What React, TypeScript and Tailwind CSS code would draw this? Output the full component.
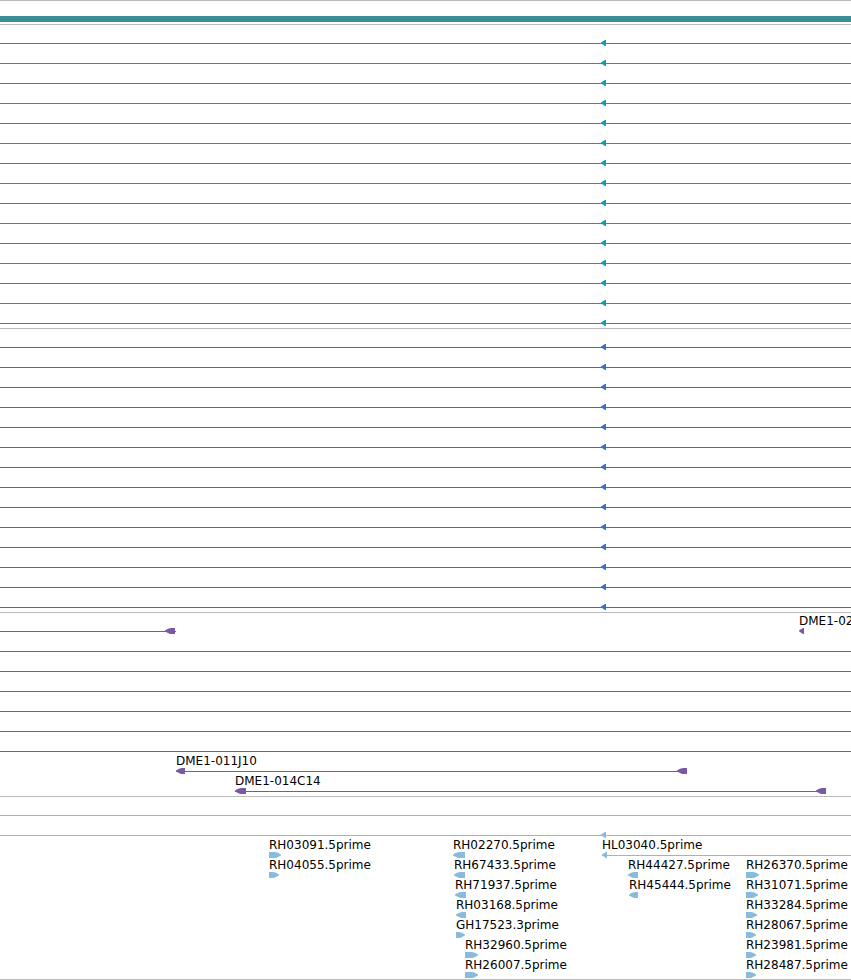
type Feature = { start: number; end: number; dir: "left" | "right"; label?: string };
type Span = { from: number; to?: number };
type RowData = { span?: Span; features?: Feature[] };
type Tone = "teal" | "blue" | "purple" | "sky";

const toneText: Record<Tone, string> = {
  teal: "text-[#0a9dba]",
  blue: "text-[#3470cc]",
  purple: "text-[#7759a8]",
  sky: "text-[#88bbdd]",
};

const left = (start: number, end: number, label?: string): Feature => ({ start, end, dir: "left", label });
const right = (start: number, end: number, label?: string): Feature => ({ start, end, dir: "right", label });
const repeat = (count: number, row: RowData): RowData[] => Array.from({ length: count }, () => row);

const hit: RowData = { span: { from: 0 }, features: [left(601, 606)] };

const bacRows: RowData[] = [
  { span: { from: 0, to: 176 }, features: [left(165, 175), left(799, 804, "DME1-02")] },
  ...repeat(6, { span: { from: 0 } }),
  { span: { from: 176, to: 687 }, features: [left(176, 185, "DME1-011J10"), left(677, 687)] },
  { span: { from: 235, to: 826 }, features: [left(235, 246, "DME1-014C14"), left(816, 826)] },
];

const estRows: RowData[] = [
  { span: { from: 0 } },
  hit,
  {
    span: { from: 602 },
    features: [right(269, 281, "RH03091.5prime"), left(453, 465, "RH02270.5prime"), left(602, 607, "HL03040.5prime")],
  },
  {
    features: [
      right(269, 279, "RH04055.5prime"),
      left(454, 465, "RH67433.5prime"),
      left(628, 638, "RH44427.5prime"),
      right(746, 759, "RH26370.5prime"),
    ],
  },
  {
    features: [
      left(455, 466, "RH71937.5prime"),
      left(629, 638, "RH45444.5prime"),
      right(746, 758, "RH31071.5prime"),
    ],
  },
  { features: [left(456, 466, "RH03168.5prime"), right(746, 757, "RH33284.5prime")] },
  { features: [right(456, 465, "GH17523.3prime"), right(746, 756, "RH28067.5prime")] },
  { features: [right(465, 478, "RH32960.5prime"), right(746, 756, "RH23981.5prime")] },
  { features: [right(465, 478, "RH26007.5prime"), right(746, 756, "RH28487.5prime")] },
];

function Arrow({ width, dir }: { width: number; dir: Feature["dir"] }) {
  const outline: [number, number][] =
    width > 6
      ? [
          [0, 2.4],
          [3, 0.8],
          [6, 0],
          [width, 0],
          [width, 6],
          [5, 6],
          [3, 5],
          [0, 3.4],
        ]
      : [
          [0, 2.6],
          [width - 1, 0],
          [width, 0],
          [width, 6],
          [width - 1, 6],
          [0, 3.2],
        ];
  const points = outline.map(([x, y]) => `${dir === "left" ? x : width - x},${y}`).join(" ");
  return (
    <svg className="block shrink-0" width={width} height={6} fill="currentColor" aria-hidden="true">
      <polygon points={points} />
    </svg>
  );
}

/* One alignment pinned at its base position: name above, strand arrow below. */
function FeaturePin({ feature }: { feature: Feature }) {
  return (
    <div className="absolute top-0 flex flex-col items-start" style={{ left: feature.start }}>
      <span className="h-[15px] whitespace-nowrap leading-4 text-black">{feature.label}</span>
      <Arrow width={feature.end - feature.start} dir={feature.dir} />
    </div>
  );
}

function Row({ row }: { row: RowData }) {
  const { span, features = [] } = row;
  return (
    <div className="relative flex h-5 items-end pb-px">
      {span && (
        <div
          className={span.to === undefined ? "h-px grow bg-current" : "h-px shrink-0 bg-current"}
          style={{ marginLeft: span.from, width: span.to === undefined ? undefined : span.to - span.from }}
        />
      )}
      {features.map((f) => (
        <FeaturePin key={f.start} feature={f} />
      ))}
    </div>
  );
}

function Track({ rows, tone }: { rows: RowData[]; tone: Tone }) {
  return (
    <section className={`flex flex-col border-t border-[#bbbbbb] ${toneText[tone]}`}>
      {rows.map((row, i) => (
        <Row key={i} row={row} />
      ))}
    </section>
  );
}

export default function App() {
  return (
    <main className="flex w-full flex-col gap-[3px] overflow-hidden border-y border-[#bbbbbb] bg-white pt-[15px] pb-0.5 font-['DejaVu_Sans',sans-serif] text-xs">
      <div className="-mb-px h-1.5 bg-[#3d8e94]" />
      <Track rows={repeat(15, hit)} tone="teal" />
      <Track rows={repeat(14, hit)} tone="blue" />
      <Track rows={bacRows} tone="purple" />
      <Track rows={estRows} tone="sky" />
    </main>
  );
}
